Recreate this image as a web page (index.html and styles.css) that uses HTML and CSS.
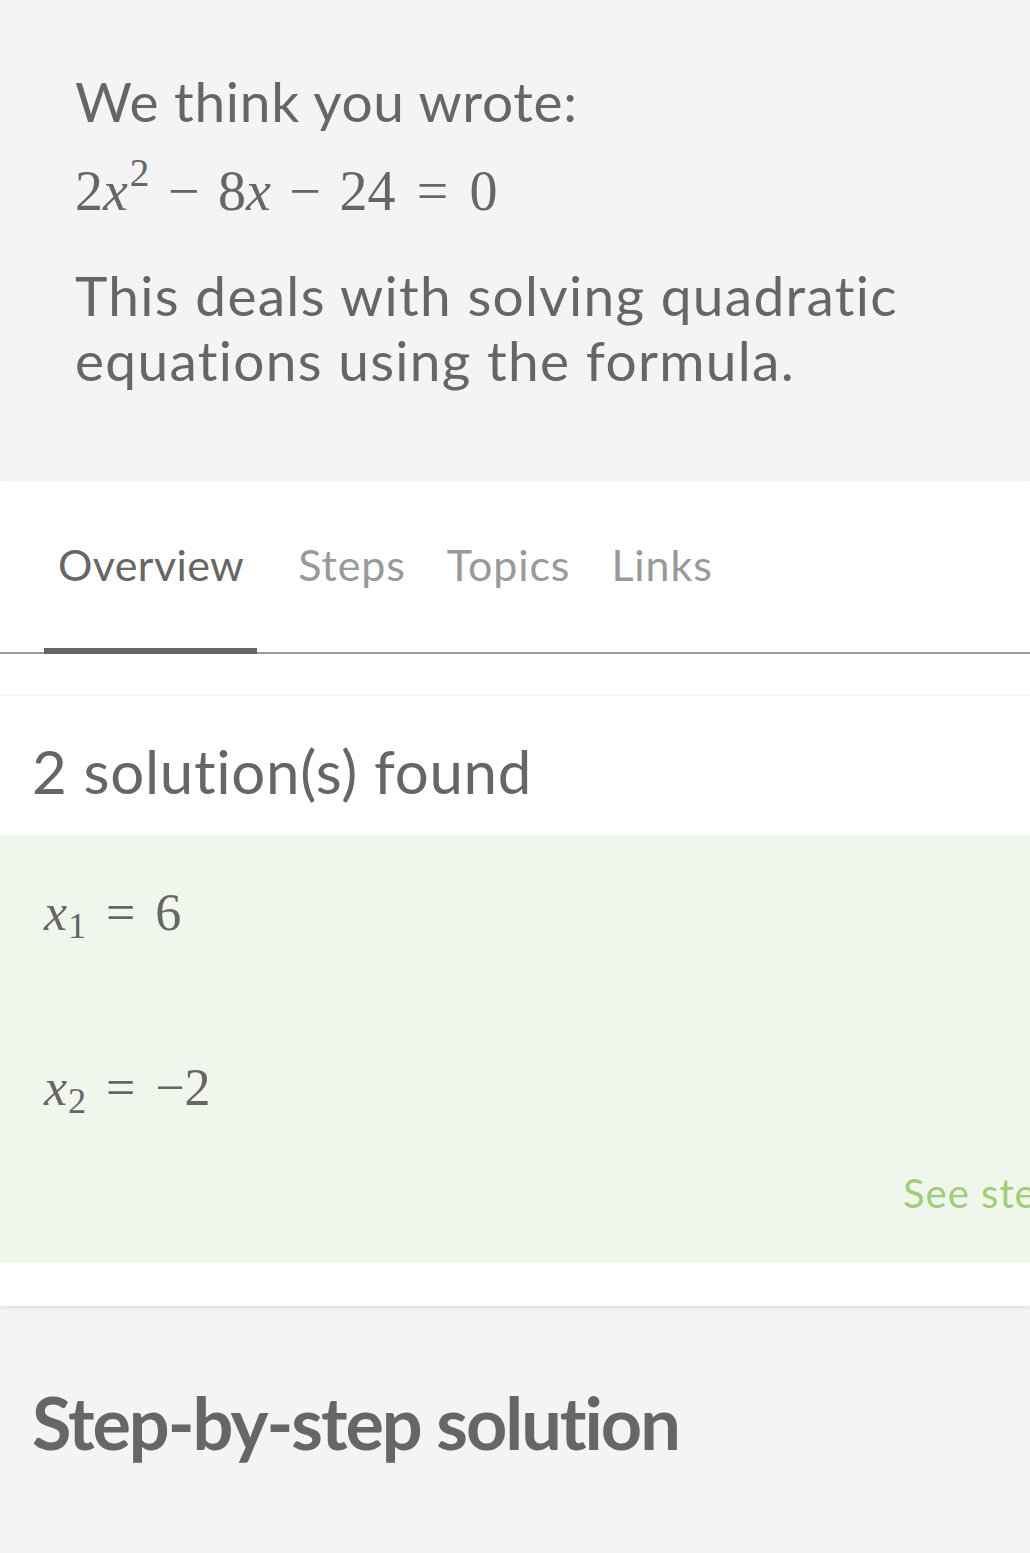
FILE: index.html
```html
<!DOCTYPE html>
<html lang="en">
<head>
<meta charset="utf-8">
<title>Solution</title>
<link rel="stylesheet" href="styles.css">
</head>
<body>
<div class="page">
  <section class="intro">
    <p class="intro-label">We think you wrote:</p>
    <p class="math intro-eq">2<i>x</i><sup>2</sup><span class="op">−</span>8<i>x</i><span class="op">−</span>24<span class="rel">=</span>0</p>
    <p class="intro-desc">This deals with solving quadratic equations using the formula.</p>
  </section>
  <section class="card">
    <nav class="tabs">
      <span class="tab active">Overview</span>
      <span class="tab">Steps</span>
      <span class="tab">Topics</span>
      <span class="tab">Links</span>
    </nav>
    <div class="spacer"></div>
    <h2 class="found">2 solution(s) found</h2>
    <div class="solutions">
      <p class="math sol"><i>x</i><sub>1</sub><span class="rel">=</span>6</p>
      <p class="math sol"><i>x</i><sub>2</sub><span class="rel">=</span>−2</p>
      <div class="see-row"><span class="see">See steps</span></div>
    </div>
    <div class="card-foot"></div>
  </section>
  <section class="steps">
    <h2 class="steps-title">Step-by-step solution</h2>
  </section>
</div>
</body>
</html>
```
FILE: styles.css
```css
html, body {
  margin: 0;
  padding: 0;
}
body {
  background: #f4f4f6;
  font-family: Lato, "Open Sans", sans-serif;
  font-variant-ligatures: none;
  color: #666;
  overflow: hidden;
  width: 1030px;
}
.page {
  width: 1030px;
  overflow: hidden;
}
.intro {
  padding: 68px 40px 0 75px;
  height: 481px;
  box-sizing: border-box;
}
.intro p {
  margin: 0;
}
.intro-label {
  font-size: 55px;
  line-height: 66px;
  letter-spacing: 0.7px;
}
.math {
  font-family: "Liberation Serif", "Times New Roman", serif;
  white-space: nowrap;
}
.math i {
  font-style: italic;
}
.op {
  margin: 0 0.33em;
}
.rel {
  margin: 0 0.38em;
}
.intro .intro-eq {
  font-size: 56px;
  line-height: 66px;
  margin-top: 24px;
}
.math sup {
  font-size: 0.7em;
  vertical-align: 0.62em;
  line-height: 0;
  margin-left: 2px;
}
.math sub {
  font-size: 0.7em;
  vertical-align: -0.22em;
  line-height: 0;
  margin-left: 1px;
}
.intro .intro-desc {
  font-size: 55px;
  line-height: 65px;
  letter-spacing: 1.3px;
  margin-top: 39px;
}
.card {
  background: #fff;
  box-shadow: 0 2px 4px rgba(0,0,0,0.08);
}
.tabs {
  display: flex;
  height: 173px;
  padding-left: 44px;
  border-bottom: 2px solid #9a9a9a;
  box-sizing: border-box;
  align-items: stretch;
}
.tab {
  font-size: 43px;
  letter-spacing: 0.9px;
  color: #999;
  display: flex;
  align-items: center;
  margin-left: 41px;
  box-sizing: border-box;
  border-bottom: 6px solid transparent;
  margin-bottom: -2px;
}
.tab.active {
  color: #666;
  border-bottom-color: #666;
  padding: 0 13px 0 14px;
  margin-left: 0;
  letter-spacing: 0.4px;
}
.spacer {
  height: 41px;
  border-bottom: 1px solid #f6f6f6;
}
.found {
  font-weight: 400;
  font-size: 60px;
  line-height: 72px;
  letter-spacing: 0.7px;
  margin: 0;
  padding: 39px 32px 0;
  height: 139px;
  box-sizing: border-box;
}
.solutions {
  background: #f0f6ec;
  height: 428px;
  padding: 48px 0 0 44px;
  box-sizing: border-box;
}
.sol {
  margin: 0;
  font-size: 52px;
  line-height: 60px;
}
.sol + .sol {
  margin-top: 115px;
}
.see-row {
  display: flex;
  padding-left: 859px;
  margin-top: 51px;
  white-space: nowrap;
}
.see {
  color: #a0cd78;
  font-size: 40px;
  line-height: 48px;
  letter-spacing: 1px;
}
.card-foot {
  height: 43px;
}
.steps {
  padding: 73px 32px 0;
}
.steps-title {
  margin: 0;
  font-size: 72px;
  line-height: 86px;
  font-weight: 700;
  letter-spacing: -2px;
  color: #666;
}
```
